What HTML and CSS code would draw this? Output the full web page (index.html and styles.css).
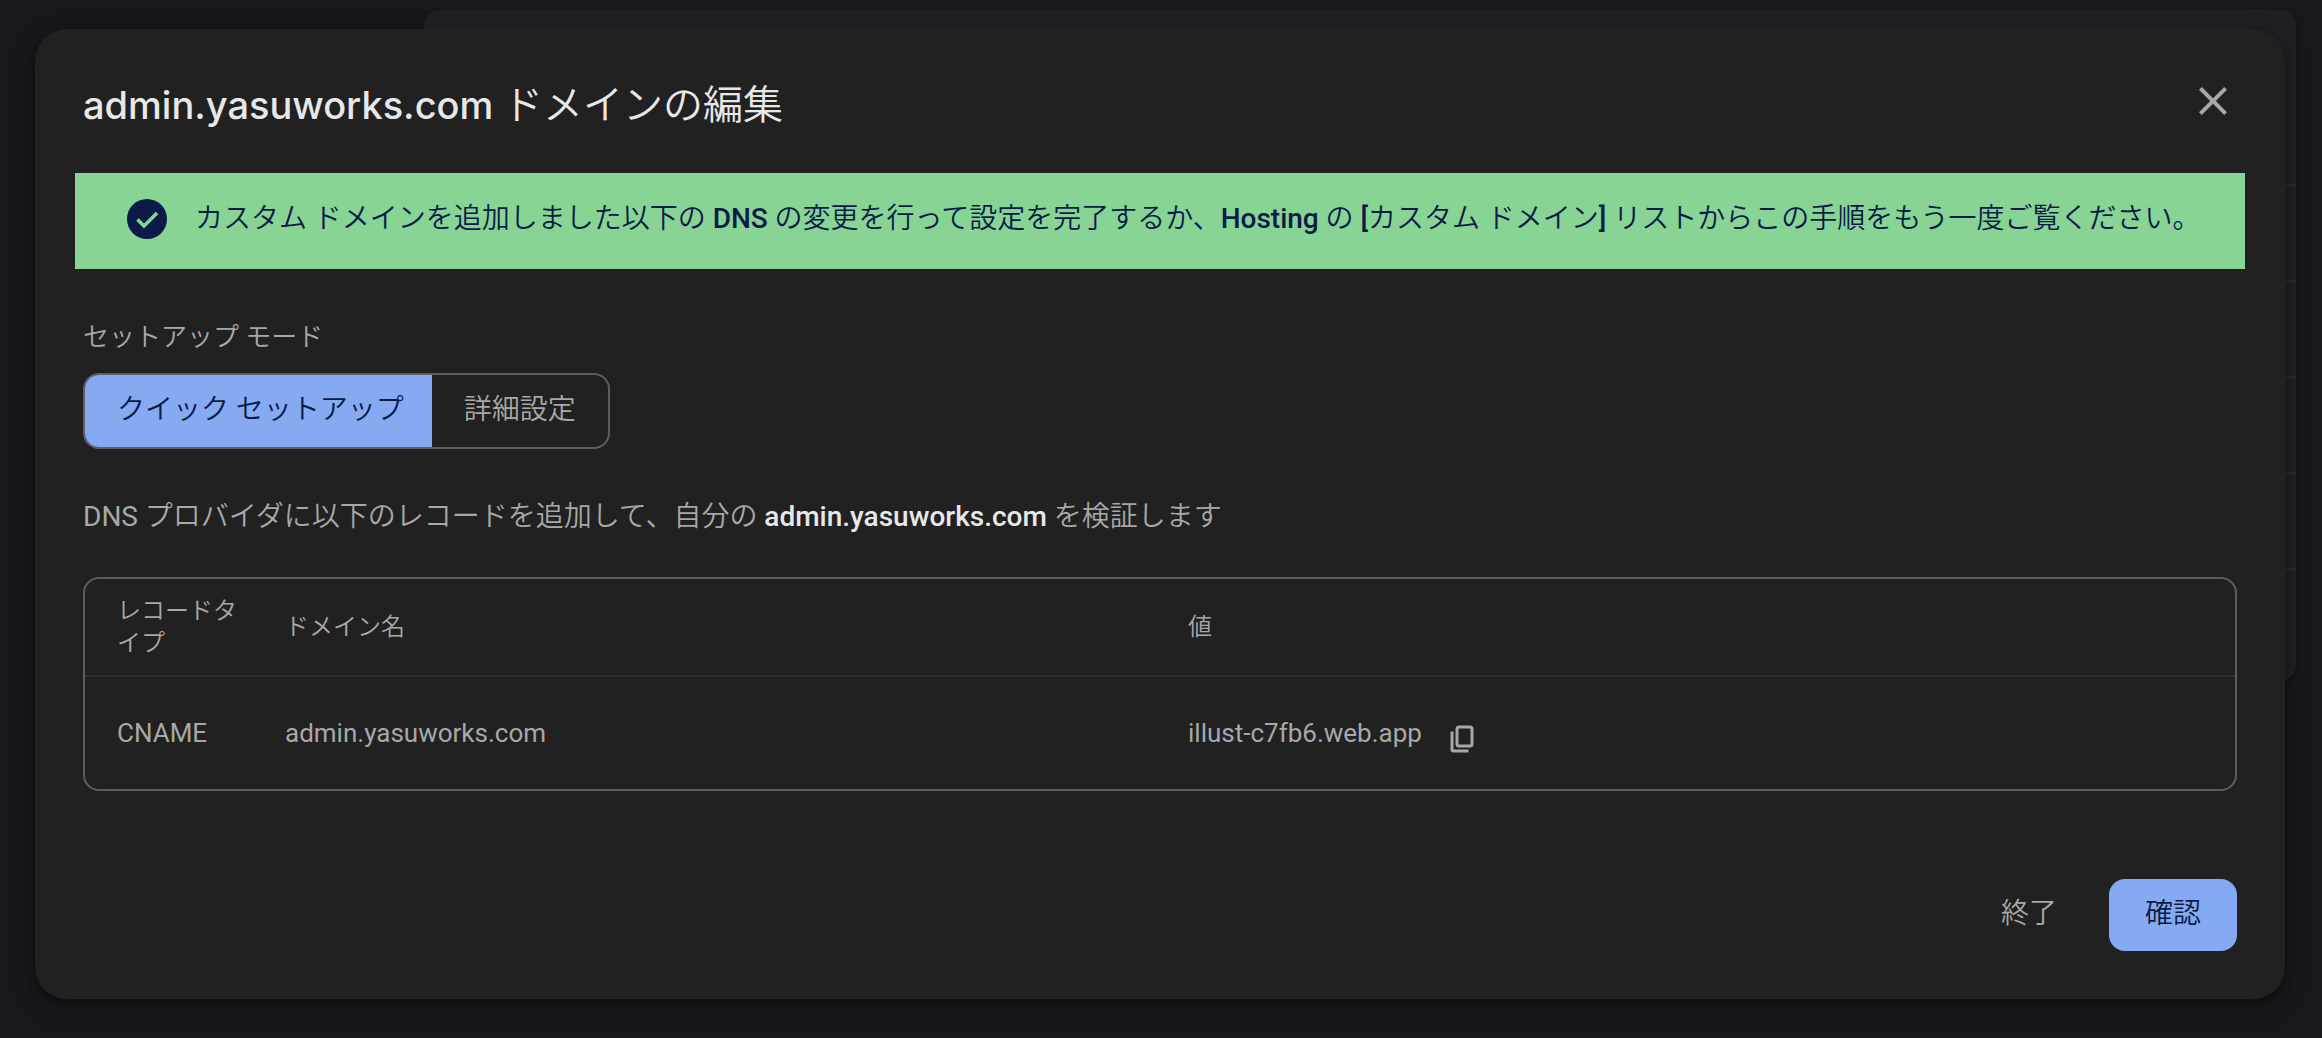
FILE: index.html
```html
<!DOCTYPE html>
<html lang="ja">
<head>
<meta charset="utf-8">
<title>ドメインの編集</title>
<meta name="viewport" content="width=device-width, initial-scale=1">
<link rel="stylesheet" href="styles.css">
</head>
<body>
<div class="stage">
  <div class="page-card" aria-hidden="true">
    <div class="page-row page-head"></div>
    <div class="page-row"></div>
    <div class="page-row"></div>
    <div class="page-row"></div>
    <div class="page-row"></div>
    <div class="page-row"></div>
  </div>
  <section class="dialog" role="dialog" aria-labelledby="dialog-title">
    <header class="dialog-header">
      <h1 class="title" id="dialog-title"><span class="title-domain">admin.yasuworks.com</span> ドメインの編集</h1>
      <button class="close" type="button" aria-label="閉じる">
        <svg viewBox="0 0 24 24" width="48" height="48"><path fill="currentColor" d="M19 6.41 17.59 5 12 10.59 6.41 5 5 6.41 10.59 12 5 17.59 6.41 19 12 13.41 17.59 19 19 17.59 13.41 12z"/></svg>
      </button>
    </header>
    <div class="banner" role="status">
      <svg class="banner-icon" viewBox="0 0 40 40" width="40" height="40"><circle cx="20" cy="20" r="20" fill="currentColor"/><path d="M10.500 20.500 17 27 30 14" fill="none" stroke="#87d494" stroke-width="3.600"/></svg>
      <p class="banner-text">カスタム ドメインを追加しました以下の <b>DNS</b> の変更を行って設定を完了するか、<b>Hosting</b> の <b>[</b>カスタム ドメイン<b>]</b> リストからこの手順をもう一度ご覧ください。</p>
    </div>
    <div class="content">
      <p class="label" id="mode-label">セットアップ モード</p>
      <div class="segments" role="group" aria-labelledby="mode-label">
        <button class="segment selected" type="button" aria-pressed="true">クイック セットアップ</button>
        <button class="segment" type="button" aria-pressed="false">詳細設定</button>
      </div>
      <p class="instruction"><span class="latin">DNS</span> プロバイダに以下のレコードを追加して、自分の <b class="domain">admin.yasuworks.com</b> を検証します</p>
      <div class="records">
        <table>
          <colgroup><col class="col-type"><col class="col-name"><col></colgroup>
          <thead><tr><th scope="col">レコードタイプ</th><th scope="col">ドメイン名</th><th scope="col">値</th></tr></thead>
          <tbody><tr>
            <td>CNAME</td>
            <td>admin.yasuworks.com</td>
            <td><div class="value">illust-c7fb6.web.app
              <button class="copy" type="button" aria-label="コピー"><svg viewBox="0 0 24 28" width="24" height="28"><rect x="7" y="2" width="15" height="19" rx="2" fill="none" stroke="currentColor" stroke-width="3"/><path d="M2 6.500V24.500a1.500 1.500 0 0 0 1.500 1.500H18.500" fill="none" stroke="currentColor" stroke-width="3"/></svg></button>
            </div></td>
          </tr></tbody>
        </table>
      </div>
      <footer class="actions">
        <button class="button" type="button">終了</button>
        <button class="button primary" type="button">確認</button>
      </footer>
    </div>
  </section>
</div>
</body>
</html>
```
FILE: styles.css
```css
* { box-sizing: border-box; }

body {
  margin: 0;
  min-height: 100vh;
  background: #17181c;
  color: #a8a8a8;
  font: 350 28px/40px Roboto, "Noto Sans CJK JP", sans-serif;
}

h1, p { margin: 0; }
svg { display: block; }
b { font-weight: 500; }

button {
  margin: 0;
  padding: 0;
  border: 0;
  background: none;
  color: inherit;
  font: inherit;
  cursor: pointer;
}

/* The page card and the dialog share one grid cell, so the dialog lies on top. */
.stage { display: grid; }
.page-card, .dialog { grid-area: 1 / 1; }

.page-card {
  align-self: start;
  margin: 10px 26px 0 424px;
  background: #1f2024;
  border-radius: 16px;
  box-shadow: 0 2px 4px rgba(0, 0, 0, .3);
  overflow: hidden;
}
.page-row { height: 96px; border-bottom: 2px solid #28292c; }
.page-head { height: 176px; }
.page-row:last-child { height: 111px; border-bottom: 0; }

.dialog {
  margin: 29px 37px 39px 35px;
  padding: 48px 40px;
  background: #212121;
  border-radius: 32px;
  box-shadow: 0 4px 8px rgba(0, 0, 0, .3), 0 8px 24px 4px rgba(0, 0, 0, .15);
}

.dialog-header {
  display: flex;
  justify-content: space-between;
  padding: 0 8px;
  height: 96px;
}
.title {
  color: #e8e8e8;
  font-size: 40px;
  font-weight: 350;
  line-height: 56px;
}
.title-domain { font-family: Inter, Roboto, sans-serif; font-size: 38px; font-weight: 500; }
.close { height: 48px; }

.banner {
  display: flex;
  align-items: center;
  gap: 28px;
  min-height: 96px;
  padding: 24px 24px 28px 52px;
  background: #87d494;
  color: #0b1b48;
}
.banner-icon { flex: none; }

.content { padding: 48px 8px 0; }
.label { font-size: 26px; }

.segments {
  display: flex;
  width: fit-content;
  margin: 16px 0 48px;
  border: 2px solid #5b5e68;
  border-radius: 16px;
  overflow: hidden;
}
.segment { height: 72px; padding: 0 32px 2px; }
.selected { padding-right: 28px; background: #86aaf2; color: #0b1b48; }
.latin { font-weight: 400; }
.domain { color: #e8e8e8; }

.records {
  margin-top: 40px;
  border: 2px solid #5b5e68;
  border-radius: 16px;
  overflow: hidden;
}
table {
  width: 100%;
  border-collapse: separate;
  border-spacing: 0;
  table-layout: fixed;
  font-size: 26px;
}
th, td { padding: 0 0 0 32px; text-align: left; }
.col-type { width: 168px; }
.col-name { width: 42%; }
th {
  height: 98px;
  border-bottom: 2px solid #303030;
  font-size: 24px;
  font-weight: 350;
  line-height: 32px;
}
td { height: 112px; font-weight: 400; }
.value { display: flex; align-items: flex-end; gap: 28px; }

.actions {
  display: flex;
  justify-content: flex-end;
  gap: 16px;
  margin-top: 88px;
}
.button { height: 72px; padding: 0 36px 2px; border-radius: 16px; }
.primary { background: #86aaf2; color: #0b1b48; }
```
